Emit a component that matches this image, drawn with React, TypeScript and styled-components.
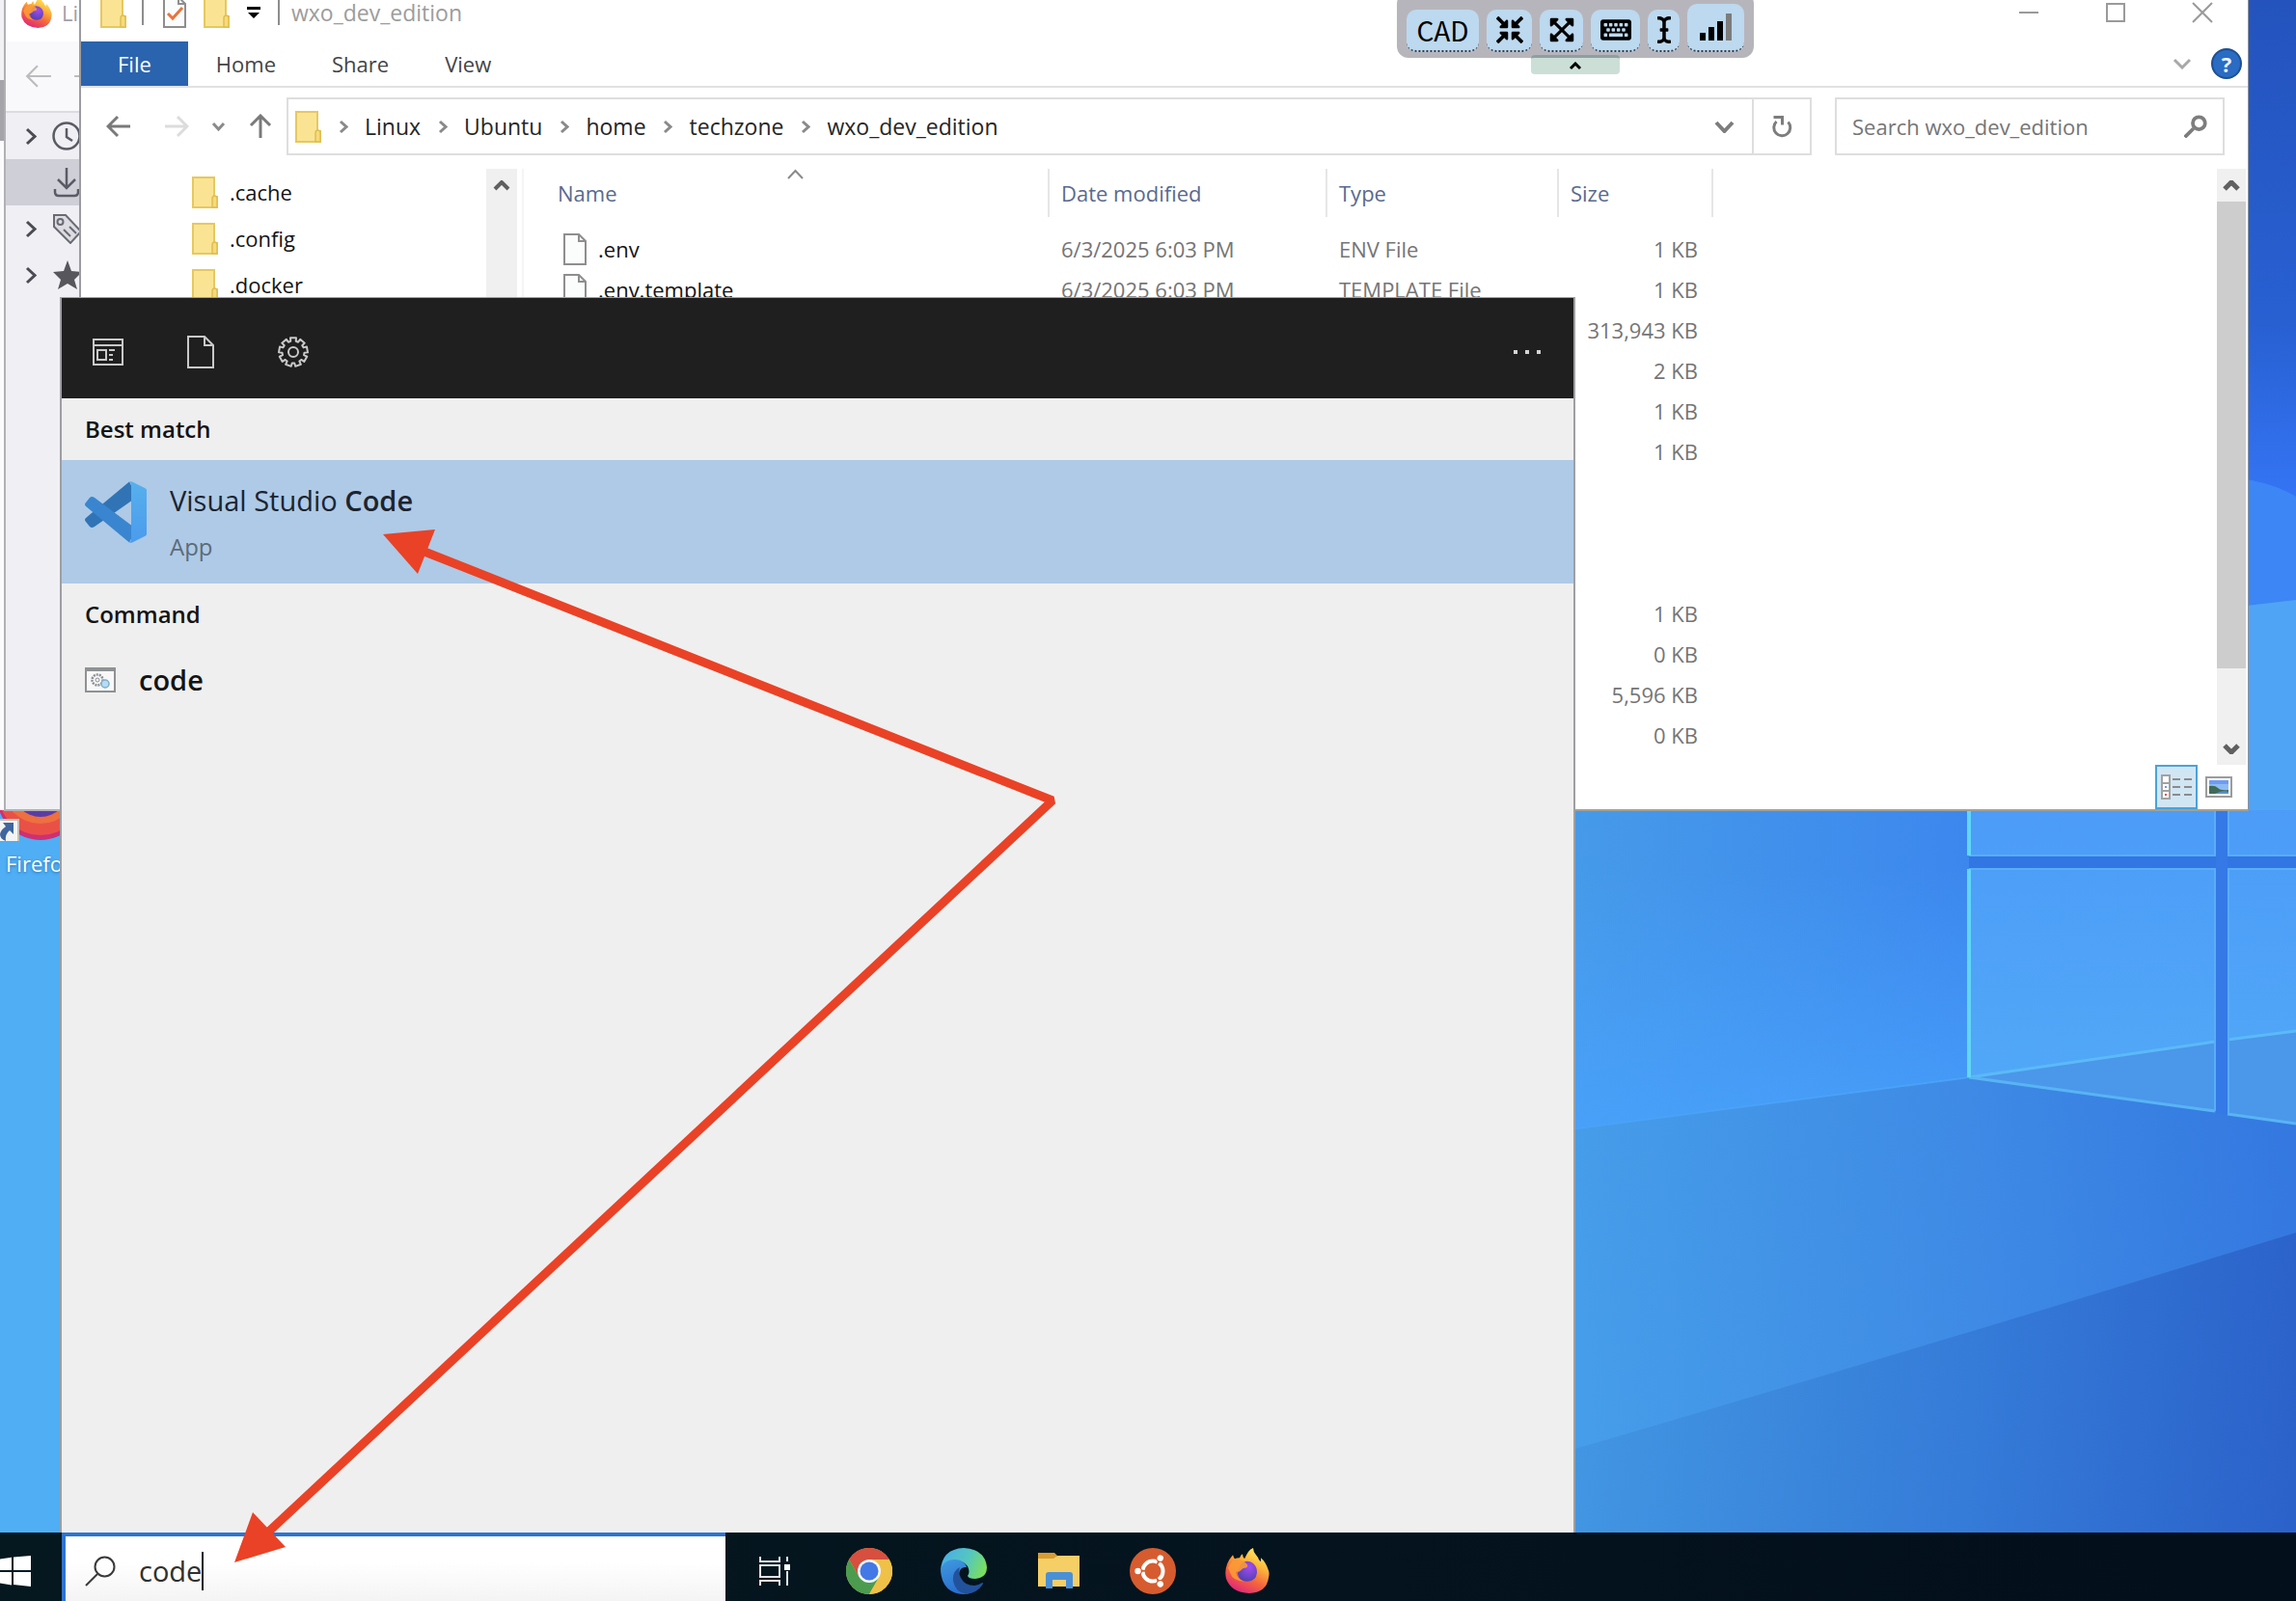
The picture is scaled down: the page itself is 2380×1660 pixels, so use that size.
import React from "react";
import styled, { createGlobalStyle } from "styled-components";
import {
  FaCompressArrowsAlt,
  FaExpandArrowsAlt,
  FaKeyboard,
  FaICursor,
} from "react-icons/fa";

const GlobalStyle = createGlobalStyle`
  *, *::before, *::after { box-sizing: border-box; }
  html, body, #root { height: 100%; margin: 0; }
  body { overflow: hidden; }
  body, button, input, table {
    font-family: "Open Sans", "Noto Sans", sans-serif;
    font-size: 22px;
    line-height: 30px;
  }
  button { border: 0; padding: 0; margin: 0; background: none; color: inherit; }
  input { border: 0; padding: 0; margin: 0; background: none; outline: none; }
  svg { display: block; flex: none; }
`;

/* ---------- desktop ---------- */

const Screen = styled.div`
  position: relative;
  display: flex;
  flex-direction: column;
  height: 100vh;
  overflow: hidden;
  background: #4faef4;
`;

const Workspace = styled.main`
  position: relative;
  flex: 1;
  min-height: 0;
  overflow: hidden;
`;

const WallpaperArt = styled.svg`
  position: absolute;
  inset: 0;
  width: 100%;
  height: 100%;
`;

const DesktopShortcut = styled.button`
  position: absolute;
  left: 0;
  top: 780px;
  width: 90px;
  display: flex;
  flex-direction: column;
  align-items: flex-start;
  gap: 8px;
  color: #fff;
  text-align: left;
`;

const ShortcutLabel = styled.span`
  padding-left: 6px;
  font-size: 22px;
  text-shadow: 0 1px 3px rgba(0, 50, 110, 0.5);
`;

/* ---------- windows at the back ---------- */

const BackWindow = styled.div`
  position: absolute;
  left: 0;
  top: 0;
  width: 40px;
  height: 840px;
  background: #fbfbfd;
`;

const BackBlock = styled.div<{ $h: number; $c: string }>`
  height: ${(p) => p.$h}px;
  background: ${(p) => p.$c};
`;

const DownloadsWindow = styled.section`
  position: absolute;
  left: 4px;
  top: -19px;
  width: 400px;
  height: 860px;
  display: flex;
  flex-direction: column;
  border: 2px solid #b1b1b5;
  background: #f0f0f4;
`;

const DownloadsTitle = styled.header`
  display: flex;
  align-items: center;
  gap: 10px;
  height: 60px;
  padding-left: 16px;
  background: #fff;
  color: #a0a0a8;
`;

const DownloadsNav = styled.div`
  display: flex;
  align-items: center;
  gap: 22px;
  height: 74px;
  padding-left: 20px;
  background: #f9f9fb;
  border-bottom: 2px solid #dcdce0;
`;

const DownloadsList = styled.div`
  display: flex;
  flex-direction: column;
`;

const DownloadsItem = styled.button<{ $active?: boolean }>`
  display: flex;
  align-items: center;
  gap: 16px;
  height: 48px;
  padding-left: 20px;
  background: ${(p) => (p.$active ? "#cfcfd8" : "transparent")};
`;

const ChevronSlot = styled.span`
  display: flex;
  width: 12px;
`;

/* ---------- file explorer ---------- */

const ExplorerWindow = styled.section`
  position: absolute;
  left: 82px;
  right: 49px;
  top: -19px;
  height: 860px;
  display: flex;
  flex-direction: column;
  border: 1px solid #8c9299;
  border-left: 2px solid #9c9ca0;
  border-bottom: 2px solid #a2a196;
  background: #fff;
  overflow: hidden;
`;

const TitleBar = styled.header`
  display: flex;
  align-items: center;
  height: 61px;
  padding: 0 36px 0 20px;
`;

const TitleTools = styled.div`
  display: flex;
  align-items: center;
  gap: 16px;
`;

const QuickGroup = styled.div`
  display: flex;
  align-items: center;
  gap: 18px;
  padding-left: 20px;
`;

const TitleSeparator = styled.span`
  width: 2px;
  height: 26px;
  background: #8d8d8d;
`;

const TitleText = styled.h1`
  margin: 0 0 0 12px;
  font-size: 23px;
  font-weight: 400;
  line-height: 30px;
  color: #9c9c9c;
`;

const WindowButtons = styled.div`
  display: flex;
  gap: 68px;
  margin-left: auto;
`;

const RibbonTabs = styled.nav`
  display: flex;
  align-items: stretch;
  height: 48px;
  padding-right: 6px;
  border-bottom: 2px solid #e1e1e1;
`;

const RibbonTab = styled.button<{ $primary?: boolean }>`
  padding: 0 ${(p) => (p.$primary ? 38 : 29)}px;
  color: ${(p) => (p.$primary ? "#fff" : "#444")};
  background: ${(p) => (p.$primary ? "#2a64ae" : "transparent")};
`;

const RibbonEnd = styled.div`
  display: flex;
  align-items: center;
  gap: 20px;
  margin-left: auto;
`;

const HelpButton = styled.button`
  width: 32px;
  height: 32px;
  border: 2px solid #1d4f91;
  border-radius: 50%;
  background: #2a6bc4;
  color: #e8f2ff;
  font-weight: 700;
  line-height: 26px;
`;

const NavRow = styled.div`
  display: flex;
  align-items: center;
  gap: 24px;
  padding: 10px 24px 14px 26px;
`;

const NavButtons = styled.div`
  display: flex;
  align-items: center;
  gap: 23px;
  margin-right: -10px;
`;

const HistoryButtons = styled.div`
  display: flex;
  gap: 34px;
`;

const AddressBar = styled.div`
  flex: 1;
  display: flex;
  align-items: stretch;
  height: 60px;
  border: 2px solid #dedede;
`;

const Crumbs = styled.div`
  flex: 1;
  display: flex;
  align-items: center;
  gap: 18px;
  padding: 0 18px 0 7px;
`;

const CrumbMark = styled.span`
  display: flex;
  justify-content: center;
  width: 9px;
`;

const Crumb = styled.button`
  font-size: 23px;
  color: #262626;
`;

const CrumbToggle = styled.button`
  margin-left: auto;
`;

const RefreshButton = styled.button`
  display: flex;
  align-items: center;
  justify-content: center;
  width: 60px;
  border-left: 2px solid #dedede;
`;

const SearchBox = styled.label`
  display: flex;
  align-items: center;
  width: 404px;
  height: 60px;
  padding: 0 16px;
  border: 2px solid #dedede;

  input {
    flex: 1;
    min-width: 0;
    font-size: 22px;
  }
  input::placeholder { color: #757575; opacity: 1; }
`;

const ExplorerBody = styled.div`
  flex: 1;
  min-height: 0;
  display: flex;
  padding-right: 2px;
`;

const Tree = styled.div`
  display: flex;
  justify-content: space-between;
  width: 459px;
  padding-right: 5px;
  border-right: 2px solid #f5f5f5;
`;

const TreeItems = styled.ul`
  margin: 0;
  padding: 0 0 0 115px;
  list-style: none;
`;

const TreeItem = styled.li`
  display: flex;
  align-items: center;
  gap: 12px;
  height: 48px;
  color: #141414;
`;

const FilePane = styled.div`
  flex: 1;
  min-width: 0;
  overflow: hidden;
`;

const FileTable = styled.table`
  width: 100%;
  table-layout: fixed;
  border-collapse: separate;
  border-spacing: 0;

  tbody::before {
    content: "";
    display: block;
    height: 12px;
  }
`;

const HeadCell = styled.th<{ $w?: number; $pad?: number }>`
  position: relative;
  width: ${(p) => (p.$w ? p.$w + "px" : "auto")};
  height: 50px;
  padding: 0 0 0 ${(p) => p.$pad ?? 12}px;
  text-align: left;
  font-weight: 400;
  color: #596a90;
  border-right: ${(p) => (p.$w ? "2px solid #e6e6e6" : "0")};
`;

const SortMark = styled.span`
  position: absolute;
  top: 0;
  left: 50%;
`;

const Cell = styled.td<{ $end?: boolean }>`
  height: 42px;
  padding: 0 ${(p) => (p.$end ? 16 : 0)}px 0 12px;
  text-align: ${(p) => (p.$end ? "right" : "left")};
  white-space: nowrap;
  color: #757575;
`;

const NameCell = styled(Cell)`
  padding-left: 41px;
  color: #141414;
`;

const FileLabel = styled.span`
  display: flex;
  align-items: center;
  gap: 12px;
`;

const ScrollTrack = styled.div<{ $w: number }>`
  display: flex;
  flex-direction: column;
  width: ${(p) => p.$w}px;
  background: #f0f0f0;
`;

const ScrollButton = styled.button<{ $last?: boolean }>`
  display: flex;
  align-items: center;
  justify-content: center;
  height: 34px;
  flex: none;
  margin-top: ${(p) => (p.$last ? "auto" : 0)};
`;

const ScrollThumb = styled.div`
  height: 484px;
  background: #cdcdcd;
`;

const StatusBar = styled.footer`
  display: flex;
  align-items: stretch;
  justify-content: flex-end;
  height: 46px;
  padding-right: 8px;
`;

const ViewButton = styled.button<{ $on?: boolean }>`
  display: flex;
  align-items: center;
  justify-content: center;
  width: 44px;
  border: 2px solid ${(p) => (p.$on ? "#4ba3d9" : "transparent")};
  background: ${(p) => (p.$on ? "#d1e6f3" : "transparent")};
`;

/* ---------- remote console toolbar ---------- */

const RemoteDock = styled.div`
  position: absolute;
  left: 1448px;
  top: -8px;
  display: flex;
  flex-direction: column;
  align-items: center;
`;

const RemoteBar = styled.div`
  display: flex;
  align-items: flex-end;
  gap: 8px;
  height: 68px;
  padding: 0 10px 6px;
  border-radius: 12px;
  background: #b7b5bc;
`;

const RemoteButton = styled.button<{ $w: number; $tall?: boolean }>`
  display: flex;
  align-items: center;
  justify-content: center;
  width: ${(p) => p.$w}px;
  height: ${(p) => (p.$tall ? 50 : 44)}px;
  border-bottom: 2px dotted #2f3d4a;
  border-radius: 10px;
  background: #bcd9ef;
  color: #000;
  font-family: "Noto Sans CJK SC", "Open Sans", sans-serif;
  font-size: 28px;
`;

const RemoteCollapse = styled.button`
  display: flex;
  align-items: center;
  justify-content: center;
  width: 92px;
  height: 20px;
  margin-top: -3px;
  border-top: 3px solid #8f9fa1;
  border-radius: 4px;
  background: #ccdfd7;
`;

/* ---------- start search panel ---------- */

const SearchPanel = styled.section`
  position: absolute;
  left: 62px;
  top: 308px;
  bottom: 0;
  width: 66%;
  display: flex;
  flex-direction: column;
  border: 2px solid #9e9fa2;
  border-top-width: 1px;
  border-bottom: 0;
  background: #efefef;
  color: #141414;
`;

const PanelHeader = styled.header`
  display: flex;
  align-items: center;
  gap: 66px;
  height: 104px;
  padding: 8px 32px 0;
  background: #1f1f1f;
`;

const MoreButton = styled.button`
  margin-left: auto;
`;

const GroupTitle = styled.h2`
  display: flex;
  align-items: center;
  height: 64px;
  margin: 0;
  padding-left: 24px;
  font-size: 24px;
  font-weight: 600;
  line-height: 32px;
`;

const BestMatch = styled.button`
  display: flex;
  align-items: flex-start;
  gap: 24px;
  height: 128px;
  padding: 22px 24px 0;
  background: #aecae6;
  color: #1b2430;
  text-align: left;
`;

const BestText = styled.span`
  display: flex;
  flex-direction: column;
  gap: 12px;
`;

const AppName = styled.span`
  font-size: 29px;
  line-height: 40px;
  strong { font-weight: 600; }
`;

const AppKind = styled.span`
  font-size: 24px;
  line-height: 32px;
  color: #5c6b7b;
`;

const CommandRow = styled.button`
  display: flex;
  align-items: center;
  gap: 24px;
  height: 72px;
  padding-left: 24px;
  font-size: 29px;
  font-weight: 600;
  line-height: 40px;
`;

/* ---------- taskbar ---------- */

const Taskbar = styled.footer`
  display: flex;
  height: 71px;
  background: linear-gradient(90deg, #06181f, #04131e 60%, #030f1b);
`;

const StartButton = styled.button`
  display: flex;
  align-items: center;
  width: 64px;
  padding-top: 8px;
`;

const TaskSearch = styled.label`
  display: flex;
  align-items: center;
  width: 688px;
  padding: 4px 0 0 20px;
  border-top: 4px solid #2f74d0;
  border-left: 4px solid #2f74d0;
  background: linear-gradient(#fff 40%, #f4f4f4);

  input {
    field-sizing: content;
    margin-left: 24px;
    font-size: 29px;
    line-height: 40px;
    color: #303030;
  }
`;

const Caret = styled.span`
  width: 2px;
  height: 40px;
  background: #1a1a1a;
`;

const TaskIcons = styled.div`
  display: flex;
  align-items: stretch;
  padding: 8px 0 0 2px;
`;

const TaskButton = styled.button`
  display: flex;
  align-items: center;
  justify-content: center;
  width: 98px;
`;

const Annotation = styled.svg`
  position: absolute;
  left: 0;
  top: 0;
  pointer-events: none;
`;

/* ---------- drawings ---------- */

type Dir = "up" | "down" | "left" | "right";

function Chevron({ dir, w, color, sw = 2 }: { dir: Dir; w: number; color: string; sw?: number }) {
  const flat = dir === "up" || dir === "down";
  const h = Math.round(w / 2);
  const W = (flat ? w : h) + 4;
  const H = (flat ? h : w) + 4;
  const pts = {
    up: [[2, H - 2], [W / 2, 2], [W - 2, H - 2]],
    down: [[2, 2], [W / 2, H - 2], [W - 2, 2]],
    right: [[2, 2], [W - 2, H / 2], [2, H - 2]],
    left: [[W - 2, 2], [2, H / 2], [W - 2, H - 2]],
  }[dir];
  return (
    <svg width={W} height={H} aria-hidden="true">
      <polyline points={pts.map((p) => p.join(",")).join(" ")} fill="none" stroke={color} strokeWidth={sw} />
    </svg>
  );
}

function Arrow({ dir, color, size = 26, sw = 3 }: { dir: Dir; color: string; size?: number; sw?: number }) {
  const turn = { left: 0, up: 90, right: 180, down: 270 }[dir];
  return (
    <svg width={size} height={size} viewBox="0 0 26 26" aria-hidden="true">
      <g transform={`rotate(${turn} 13 13)`} fill="none" stroke={color} strokeWidth={sw}>
        <path d="M2 13H25M12 3L2 13l10 10" />
      </g>
    </svg>
  );
}

function FolderIcon() {
  return (
    <svg width="27" height="33" viewBox="0 0 27 33" aria-hidden="true">
      <path d="M1 1h22v20h3v11H1z" fill="#fae494" stroke="#e6c860" strokeWidth="2" />
      <path d="M21 32V23q0-3 2.500-3t2.500 3v9z" fill="#f6da7c" stroke="#e0be50" strokeWidth="1.500" />
    </svg>
  );
}

function PageIcon({ checked }: { checked?: boolean }) {
  return (
    <svg width="24" height="33" viewBox="0 0 24 33" aria-hidden="true">
      <path d="M1 1h15l7 7v24H1z" fill="#fbfcfc" stroke="#8e8e8e" strokeWidth="2" />
      <path d="M16 1v7h7" fill="none" stroke="#8e8e8e" strokeWidth="2" />
      {checked && <path d="M5 18l5 5 10-11" fill="none" stroke="#e8743b" strokeWidth="3" />}
    </svg>
  );
}

function FirefoxIcon({ w = 46, h = 46, id }: { w?: number; h?: number; id: string }) {
  return (
    <svg width={w} height={h} viewBox="0 0 46 46" preserveAspectRatio="none" aria-hidden="true">
      <defs>
        <linearGradient id={`${id}a`} x1="0.800" y1="0" x2="0.300" y2="1">
          <stop offset="0" stopColor="#fff36a" />
          <stop offset="0.350" stopColor="#fbb43c" />
          <stop offset="0.650" stopColor="#f4663c" />
          <stop offset="1" stopColor="#e0247c" />
        </linearGradient>
        <radialGradient id={`${id}b`} cx="0.600" cy="0.300" r="0.700">
          <stop offset="0" stopColor="#a34bf0" />
          <stop offset="1" stopColor="#5342b4" />
        </radialGradient>
      </defs>
      <path
        d="M8 7q1 3 2 4 2-1 5-1 1-3 3-4 0 3 2 5 2-4 4-7 2-3 5-4 0 4 3 7 2 2 3 5l2 2 0-4q5 4 8 13 1 3 0 7-2 15-20 16Q6 45 1 31-2 18 8 7z"
        fill={`url(#${id}a)`}
      />
      <path d="M16 17q4-5 10-3 7 3 7 11-1 9-10 9-9 0-10-8 0-4 3-9z" fill={`url(#${id}b)`} />
      <path d="M3 20q4-9 12-8 5 1 8 5 1 2-1 3-4 0-6 3-2 2-5 1 1 8 9 10-12 0-15-9z" fill="#fb9a36" opacity="0.900" />
    </svg>
  );
}

function ClockIcon() {
  return (
    <svg width="30" height="30" viewBox="0 0 30 30" fill="none" stroke="#5b5b66" strokeWidth="2.500" aria-hidden="true">
      <circle cx="15" cy="15" r="13.500" />
      <path d="M15 7v9l6 4" />
    </svg>
  );
}

function DownloadIcon() {
  return (
    <svg width="30" height="32" viewBox="0 0 30 32" fill="none" stroke="#5b5b66" strokeWidth="2.500" aria-hidden="true">
      <path d="M15 1v21M6 13l9 9 9-9M3 23v3q0 4 4 4h16q4 0 4-4v-3" />
    </svg>
  );
}

function TagIcon() {
  return (
    <svg width="32" height="32" viewBox="0 0 32 32" fill="none" stroke="#6a6a74" strokeWidth="2" aria-hidden="true">
      <path d="M2 2h12l16 17-11 12L2 14z" fill="#dcdce2" />
      <circle cx="8.500" cy="9" r="3" />
      <path d="M12 17l7 7M18 14l7 7" />
    </svg>
  );
}

function StarIcon() {
  return (
    <svg width="32" height="32" viewBox="0 0 32 32" fill="#56565c" aria-hidden="true">
      <path d="M16 1l4 11 11 1-8 8 3 10-10-6-10 6 3-10-8-8 11-1z" />
    </svg>
  );
}

function Magnifier({ size, color, sw }: { size: number; color: string; sw: number }) {
  return (
    <svg width={size} height={size} viewBox="0 0 32 32" fill="none" stroke={color} strokeWidth={sw} aria-hidden="true">
      <circle cx="20.500" cy="11.500" r={11 - sw / 2} />
      <path d="M13 19L1 31" />
    </svg>
  );
}

function RefreshIcon() {
  return (
    <svg width="22" height="24" viewBox="0 0 22 24" fill="none" stroke="#7d7d7d" strokeWidth="3" aria-hidden="true">
      <path d="M17.500 7.500a8.500 8.500 0 1 1-12 -0.500" />
      <path d="M2.500 2.500h9v8" />
    </svg>
  );
}

function GearIcon() {
  const teeth = 9;
  const pts: string[] = [];
  for (let i = 0; i < teeth; i++) {
    const base = (i * 2 * Math.PI) / teeth - Math.PI / 2;
    const seq: [number, number][] = [
      [-0.24, 11.5],
      [-0.2, 15],
      [0.2, 15],
      [0.24, 11.5],
    ];
    seq.forEach(([a, r]) => {
      pts.push(`${(16 + r * Math.cos(base + a)).toFixed(2)},${(16 + r * Math.sin(base + a)).toFixed(2)}`);
    });
  }
  return (
    <svg width="32" height="32" viewBox="0 0 32 32" fill="none" stroke="#c9c9c9" strokeWidth="2" strokeLinejoin="round" aria-hidden="true">
      <polygon points={pts.join(" ")} />
      <circle cx="16" cy="16" r="5" />
    </svg>
  );
}

function AppsIcon() {
  return (
    <svg width="32" height="28" viewBox="0 0 32 28" fill="none" stroke="#c9c9c9" strokeWidth="2" aria-hidden="true">
      <path d="M1 1h30v26H1zM1 7h30M5 12h9v10H5zM17 12h6M17 17h4M17 22h4" />
    </svg>
  );
}

function BlankPageIcon() {
  return (
    <svg width="28" height="34" viewBox="0 0 28 34" fill="none" stroke="#c9c9c9" strokeWidth="2" aria-hidden="true">
      <path d="M1 1h17l9 9v23H1zM18 1v9h9" />
    </svg>
  );
}

function DotsIcon() {
  return (
    <svg width="30" height="4" viewBox="0 0 30 4" fill="#d4d4d4" aria-hidden="true">
      <path d="M0 0h4v4H0zM12 0h4v4h-4zM24 0h4v4h-4z" />
    </svg>
  );
}

function CodeLogo() {
  return (
    <svg width="64" height="64" viewBox="0 0 64 64" aria-hidden="true">
      <defs>
        <linearGradient id="vsRight" x1="0" y1="0" x2="0" y2="1">
          <stop offset="0" stopColor="#56b0ec" />
          <stop offset="1" stopColor="#4b9bed" />
        </linearGradient>
      </defs>
      <path d="M46 0.500L1 38q-2 2 0 4l4 5q2 2 5 0L48 20.500 50 8z" fill="#3074b6" />
      <path d="M46 63.500L1 26q-2-2 0-4l4-5q2-2 5 0l38 28.500L50 56z" fill="#3a85cf" />
      <path d="M46 0.500q1.500-0.500 3 0L63 7.500q1 0.500 1 2v45q0 1.500-1 2l-14 7q-1.500 0.500-3 0 2-1 2-4V4.500q0-3-2-4z" fill="url(#vsRight)" />
    </svg>
  );
}

function CommandIcon() {
  return (
    <svg width="32" height="26" viewBox="0 0 32 26" aria-hidden="true">
      <path d="M1 1h30v24H1z" fill="#f8f8f8" stroke="#8f9194" strokeWidth="2" />
      <path d="M1 0h30v4H1z" fill="#8f9194" />
      <circle cx="13" cy="13" r="5.500" fill="none" stroke="#8a8f94" strokeWidth="2.500" strokeDasharray="2 1" />
      <circle cx="13" cy="13" r="2" fill="none" stroke="#8a8f94" />
      <circle cx="21" cy="17" r="4" fill="#b5dcf2" stroke="#7eaccb" strokeWidth="1.500" />
    </svg>
  );
}

function SignalIcon() {
  return (
    <svg width="34" height="28" viewBox="0 0 34 28" aria-hidden="true">
      <path d="M0 20h6v8H0zM9 14h6v14H9zM18 8h6v20h-6z" />
      <path d="M27 0h6v28h-6z" fill="#7c7c7c" />
    </svg>
  );
}

function DetailsIcon() {
  return (
    <svg width="32" height="26" viewBox="0 0 32 26" fill="none" stroke="#8b8b8b" strokeWidth="2" aria-hidden="true">
      <path d="M1 1h8v24H1zM1 9h8M1 17h8" fill="#fff" stroke="#a2a2a2" />
      <path d="M12 5h8M24 5h8M12 13h8M24 13h8M12 21h8M24 21h8" />
      <path d="M4 13h2" stroke="#6a9be8" />
      <path d="M4 21h2" stroke="#d9584c" />
    </svg>
  );
}

function ThumbsIcon() {
  return (
    <svg width="28" height="22" viewBox="0 0 28 22" aria-hidden="true">
      <path d="M1 1h26v20H1z" fill="#fff" stroke="#9c9c9c" strokeWidth="2" />
      <path d="M4 4h20v14H4z" fill="#8ebcf2" />
      <path d="M4 4h20v4H4z" fill="#6f9df3" />
      <path d="M4 10q6-1 9 2t11 2v4H4z" fill="#3f6b58" />
      <path d="M10 18q7-4 14-2v2z" fill="#5c8fca" />
    </svg>
  );
}

function WindowsIcon() {
  return (
    <svg width="32" height="32" viewBox="0 0 32 32" fill="#fff" aria-hidden="true">
      <path d="M0 3.500l12-1.700V15H0zM14 1.500L32 0v15H14zM0 17h12v13.500L0 28.500zM14 17h18v15l-18-2z" />
    </svg>
  );
}

function TaskViewIcon() {
  return (
    <svg width="32" height="30" viewBox="0 0 32 30" fill="none" stroke="#dfe4e6" strokeWidth="2" aria-hidden="true">
      <path d="M1 0v5h20V0M1 30v-5h20v5M1 9h20v12H1zM29 0v5M29 15v15" />
      <path d="M26 8h6v6h-6z" fill="#fff" stroke="none" />
    </svg>
  );
}

function ChromeIcon() {
  return (
    <svg width="48" height="48" viewBox="0 0 48 48" aria-hidden="true">
      <circle cx="24" cy="24" r="24" fill="#f0c148" />
      <path d="M3.200 12A24 24 0 0 1 44.800 12L24 13 13.600 30z" fill="#d64f3f" />
      <path d="M3.200 12A24 24 0 0 0 24 48L34.400 30 24 35 13.600 30z" fill="#4b9c4f" />
      <path d="M44.800 12A24 24 0 0 1 24 48L34.400 30 34 18 24 12z" fill="#f0c148" />
      <circle cx="24" cy="24" r="12" fill="#f5f7fb" />
      <circle cx="24" cy="24" r="9.500" fill="#4379e6" />
    </svg>
  );
}

function EdgeIcon() {
  return (
    <svg width="48" height="48" viewBox="0 0 48 48" aria-hidden="true">
      <defs>
        <linearGradient id="edgeTop" x1="0" y1="0.300" x2="1" y2="0.600">
          <stop offset="0" stopColor="#4aaee8" />
          <stop offset="0.550" stopColor="#55c6c0" />
          <stop offset="1" stopColor="#7be05a" />
        </linearGradient>
        <linearGradient id="edgeBody" x1="0" y1="0" x2="0.300" y2="1">
          <stop offset="0" stopColor="#3f9ade" />
          <stop offset="1" stopColor="#2a6fd0" />
        </linearGradient>
      </defs>
      <path d="M0 24Q1 1 24 0q22 1 24 20 0 11-12 12-7 0-8-3 3-4 0-10-5-7-14-6Q4 14 0 24z" fill="url(#edgeTop)" />
      <path d="M0 24Q2 12 15 12q9 0 12 8-7-1-8 7 0 14 13 19-4 2-8 2Q2 47 0 24z" fill="url(#edgeBody)" />
      <path d="M13 34Q12 24 20 20q-2 5 1 11 4 8 14 8 4 0 8-3 2 0 1 1-5 9-17 11-12-2-14-14z" fill="#23529c" />
    </svg>
  );
}

function ExplorerIcon() {
  return (
    <svg width="43" height="37" viewBox="0 0 43 37" aria-hidden="true">
      <path d="M0 0h17l3 3-3 5H0z" fill="#d99c33" />
      <path d="M0 6h16l4-3h23v32H0z" fill="#f5cf66" />
      <path d="M8 37V23q0-3 3-3h22q3 0 3 3v14h-7v-9H15v9z" fill="#4a90d6" />
    </svg>
  );
}

function UbuntuIcon() {
  return (
    <svg width="48" height="48" viewBox="0 0 48 48" aria-hidden="true">
      <circle cx="24" cy="24" r="24" fill="#d65c2f" />
      <circle cx="24" cy="24" r="10.500" fill="none" stroke="#fff" strokeWidth="4" strokeDasharray="20 2" strokeDashoffset="10" />
      {[180, 300, 60].map((a) => (
        <g key={a} transform={`rotate(${a} 24 24)`}>
          <circle cx="39.500" cy="24" r="4.500" fill="#d65c2f" />
          <circle cx="39.500" cy="24" r="3.200" fill="#fff" />
        </g>
      ))}
    </svg>
  );
}

function Wallpaper() {
  return (
    <WallpaperArt viewBox="0 0 2380 1589" preserveAspectRatio="xMaxYMin slice" aria-hidden="true">
      <defs>
        <linearGradient id="wpBase" gradientUnits="userSpaceOnUse" x1="1633" y1="0" x2="2041" y2="0">
          <stop offset="0" stopColor="#469ae9" />
          <stop offset="1" stopColor="#3c87ee" />
        </linearGradient>
        <linearGradient id="wpGlow" x1="0" y1="0" x2="0" y2="1">
          <stop offset="0" stopColor="#49a2fc" stopOpacity="0" />
          <stop offset="1" stopColor="#49a2fc" stopOpacity="0.800" />
        </linearGradient>
        <linearGradient id="wpMid" gradientUnits="userSpaceOnUse" x1="1633" y1="1250" x2="2380" y2="1200">
          <stop offset="0" stopColor="#469de9" />
          <stop offset="0.550" stopColor="#3e8ae5" />
          <stop offset="1" stopColor="#3478e0" />
        </linearGradient>
        <linearGradient id="wpLow" gradientUnits="userSpaceOnUse" x1="1633" y1="1450" x2="2380" y2="1500">
          <stop offset="0" stopColor="#4296e2" />
          <stop offset="0.550" stopColor="#357bd8" />
          <stop offset="1" stopColor="#2b62ca" />
        </linearGradient>
        <linearGradient id="wpSky" x1="0" y1="0" x2="0" y2="1">
          <stop offset="0" stopColor="#2453bd" />
          <stop offset="0.650" stopColor="#2860d2" />
          <stop offset="1" stopColor="#3474f4" />
        </linearGradient>
        <linearGradient id="wpPane" x1="0" y1="0" x2="0" y2="1">
          <stop offset="0" stopColor="#4b9af8" />
          <stop offset="1" stopColor="#52a9f7" />
        </linearGradient>
      </defs>
      <rect width="1633" height="1589" fill="#4faef4" />
      <rect x="1620" y="0" width="760" height="1200" fill="url(#wpBase)" />
      <path d="M1620 900H2041V1117L1620 1172z" fill="url(#wpGlow)" />
      <path d="M1620 1172L2041 1117L2380 1165V1589H1620z" fill="url(#wpMid)" />
      <path d="M1620 1172L2041 1117" stroke="#4aa2f8" strokeWidth="2" />
      <path d="M1620 1506Q2000 1395 2380 1278V1589H1620z" fill="url(#wpLow)" />
      <path d="M2041 800H2296V1152L2041 1117z" fill="url(#wpPane)" />
      <path d="M2309 800H2380V1165L2309 1155z" fill="url(#wpPane)" />
      <path d="M2041 1117L2296 1080V1152zM2309 1078L2380 1069V1165L2309 1155z" fill="#4b97ea" />
      <path d="M2041 1117L2296 1080M2309 1078L2380 1069" stroke="#5bbaf8" strokeWidth="3" />
      <path d="M2041 1117L2296 1152M2309 1155L2380 1165" stroke="#58b4f4" strokeWidth="3" />
      <path d="M2296 800V1152M2310 840V1155M2041 887H2380M2041 901H2380" stroke="#58adf8" strokeWidth="2" />
      <path d="M2041 888H2380V900H2041z" fill="#3176e2" />
      <path d="M2297 800H2309V1156L2297 1154z" fill="#3479e6" />
      <path d="M2041 800V887M2041 901V1117" stroke="#62d6f6" strokeWidth="4" />
      <path d="M2320 0H2380V515Q2355 500 2320 496z" fill="url(#wpSky)" />
      <path d="M2320 496Q2355 500 2380 515V622L2320 629z" fill="#3c86f5" />
      <path d="M2320 629L2380 622V840H2320z" fill="#50a4f6" />
    </WallpaperArt>
  );
}

/* ---------- data ---------- */

type Row = { name?: string; date?: string; type?: string; size?: string };

const rows: Row[] = [
  { name: ".env", date: "6/3/2025 6:03 PM", type: "ENV File", size: "1 KB" },
  { name: ".env.template", date: "6/3/2025 6:03 PM", type: "TEMPLATE File", size: "1 KB" },
  { size: "313,943 KB" },
  { size: "2 KB" },
  { size: "1 KB" },
  { size: "1 KB" },
  {},
  {},
  {},
  { size: "1 KB" },
  { size: "0 KB" },
  { size: "5,596 KB" },
  { size: "0 KB" },
];

const path = ["Linux", "Ubuntu", "home", "techzone", "wxo_dev_edition"];
const folders = [".cache", ".config", ".docker"];

/* ---------- parts ---------- */

function Downloads() {
  return (
    <DownloadsWindow aria-label="Library">
      <DownloadsTitle>
        <FirefoxIcon w={32} h={32} id="ffTitle" />
        <span>Library</span>
      </DownloadsTitle>
      <DownloadsNav>
        <Arrow dir="left" color="#bcbcbf" size={28} sw={2} />
        <Arrow dir="right" color="#bcbcbf" size={28} sw={2} />
      </DownloadsNav>
      <DownloadsList>
        <DownloadsItem aria-label="History">
          <ChevronSlot><Chevron dir="right" w={15} color="#4c4c55" sw={3} /></ChevronSlot>
          <ClockIcon />
        </DownloadsItem>
        <DownloadsItem $active aria-label="Downloads">
          <ChevronSlot />
          <DownloadIcon />
        </DownloadsItem>
        <DownloadsItem aria-label="Tags">
          <ChevronSlot><Chevron dir="right" w={15} color="#4c4c55" sw={3} /></ChevronSlot>
          <TagIcon />
        </DownloadsItem>
        <DownloadsItem aria-label="Bookmarks">
          <ChevronSlot><Chevron dir="right" w={15} color="#4c4c55" sw={3} /></ChevronSlot>
          <StarIcon />
        </DownloadsItem>
      </DownloadsList>
    </DownloadsWindow>
  );
}

function QuickTools() {
  return (
    <QuickGroup>
      <PageIcon checked />
      <FolderIcon />
      <svg width="14" height="12" aria-hidden="true">
        <path d="M0 0h14v3H0zM1 6h12l-6 6z" fill="#000" />
      </svg>
      <TitleSeparator />
    </QuickGroup>
  );
}

function Explorer() {
  return (
    <ExplorerWindow>
      <TitleBar>
        <TitleTools>
          <FolderIcon />
          <TitleSeparator />
        </TitleTools>
        <QuickTools />
        <TitleText>wxo_dev_edition</TitleText>
        <WindowButtons>
          <button aria-label="Minimize">
            <svg width="22" height="22" stroke="#9a9a9a" strokeWidth="2"><path d="M1 11h20" /></svg>
          </button>
          <button aria-label="Maximize">
            <svg width="22" height="22" fill="none" stroke="#9a9a9a" strokeWidth="2"><path d="M2 2h18v18H2z" /></svg>
          </button>
          <button aria-label="Close">
            <svg width="22" height="22" stroke="#9a9a9a" strokeWidth="2"><path d="M1 1l20 20M21 1L1 21" /></svg>
          </button>
        </WindowButtons>
      </TitleBar>
      <RibbonTabs>
        <RibbonTab $primary>File</RibbonTab>
        <RibbonTab>Home</RibbonTab>
        <RibbonTab>Share</RibbonTab>
        <RibbonTab>View</RibbonTab>
        <RibbonEnd>
          <button aria-label="Expand the ribbon"><Chevron dir="down" w={16} color="#a8a8a8" sw={3} /></button>
          <HelpButton aria-label="Help">?</HelpButton>
        </RibbonEnd>
      </RibbonTabs>
      <NavRow>
        <NavButtons>
          <HistoryButtons>
            <button aria-label="Back"><Arrow dir="left" color="#7a7a7a" /></button>
            <button aria-label="Forward"><Arrow dir="right" color="#dcdcdc" /></button>
          </HistoryButtons>
          <button aria-label="Recent locations"><Chevron dir="down" w={11} color="#8a8a8a" sw={3} /></button>
          <button aria-label="Up"><Arrow dir="up" color="#7a7a7a" /></button>
        </NavButtons>
        <AddressBar>
          <Crumbs>
            <FolderIcon />
            {path.map((p) => (
              <React.Fragment key={p}>
                <CrumbMark><Chevron dir="right" w={11} color="#8a8a8a" sw={3} /></CrumbMark>
                <Crumb>{p}</Crumb>
              </React.Fragment>
            ))}
            <CrumbToggle aria-label="Previous locations">
              <Chevron dir="down" w={17} color="#7d7d7d" sw={4} />
            </CrumbToggle>
          </Crumbs>
          <RefreshButton aria-label="Refresh"><RefreshIcon /></RefreshButton>
        </AddressBar>
        <SearchBox>
          <input type="text" placeholder="Search wxo_dev_edition" aria-label="Search wxo_dev_edition" />
          <Magnifier size={24} color="#7d7d7d" sw={5} />
        </SearchBox>
      </NavRow>
      <ExplorerBody>
        <Tree>
          <TreeItems>
            {folders.map((f) => (
              <TreeItem key={f}>
                <FolderIcon />
                {f}
              </TreeItem>
            ))}
          </TreeItems>
          <ScrollTrack $w={32}>
            <ScrollButton aria-label="Scroll tree up"><Chevron dir="up" w={14} color="#606060" sw={4} /></ScrollButton>
          </ScrollTrack>
        </Tree>
        <FilePane>
          <FileTable>
            <thead>
              <tr>
                <HeadCell $w={545} $pad={35}>
                  Name
                  <SortMark><Chevron dir="up" w={15} color="#8a8a8a" /></SortMark>
                </HeadCell>
                <HeadCell $w={288}>Date modified</HeadCell>
                <HeadCell $w={240}>Type</HeadCell>
                <HeadCell $w={160}>Size</HeadCell>
                <HeadCell as="td" />
              </tr>
            </thead>
            <tbody>
              {rows.map((r, i) => (
                <tr key={i}>
                  <NameCell>
                    {r.name && (
                      <FileLabel>
                        <PageIcon />
                        {r.name}
                      </FileLabel>
                    )}
                  </NameCell>
                  <Cell>{r.date}</Cell>
                  <Cell>{r.type}</Cell>
                  <Cell $end>{r.size}</Cell>
                </tr>
              ))}
            </tbody>
          </FileTable>
        </FilePane>
        <ScrollTrack $w={30}>
          <ScrollButton aria-label="Scroll up"><Chevron dir="up" w={14} color="#606060" sw={5} /></ScrollButton>
          <ScrollThumb />
          <ScrollButton $last aria-label="Scroll down"><Chevron dir="down" w={14} color="#606060" sw={5} /></ScrollButton>
        </ScrollTrack>
      </ExplorerBody>
      <StatusBar>
        <ViewButton $on aria-label="Details view"><DetailsIcon /></ViewButton>
        <ViewButton aria-label="Large icons view"><ThumbsIcon /></ViewButton>
      </StatusBar>
    </ExplorerWindow>
  );
}

function RemoteToolbar() {
  return (
    <RemoteDock>
      <RemoteBar>
        <RemoteButton $w={75}>CAD</RemoteButton>
        <RemoteButton $w={47} aria-label="Shrink"><FaCompressArrowsAlt size={28} /></RemoteButton>
        <RemoteButton $w={45} aria-label="Full screen"><FaExpandArrowsAlt size={28} /></RemoteButton>
        <RemoteButton $w={51} aria-label="Keyboard"><FaKeyboard size={32} /></RemoteButton>
        <RemoteButton $w={33} aria-label="Text input"><FaICursor size={28} /></RemoteButton>
        <RemoteButton $w={59} $tall aria-label="Connection"><SignalIcon /></RemoteButton>
      </RemoteBar>
      <RemoteCollapse aria-label="Collapse toolbar"><Chevron dir="up" w={10} color="#000" sw={3} /></RemoteCollapse>
    </RemoteDock>
  );
}

function StartSearch() {
  return (
    <SearchPanel>
      <PanelHeader>
        <button aria-label="Apps"><AppsIcon /></button>
        <button aria-label="Documents"><BlankPageIcon /></button>
        <button aria-label="Settings"><GearIcon /></button>
        <MoreButton aria-label="More"><DotsIcon /></MoreButton>
      </PanelHeader>
      <GroupTitle>Best match</GroupTitle>
      <BestMatch>
        <CodeLogo />
        <BestText>
          <AppName>Visual Studio <strong>Code</strong></AppName>
          <AppKind>App</AppKind>
        </BestText>
      </BestMatch>
      <GroupTitle>Command</GroupTitle>
      <CommandRow>
        <CommandIcon />
        code
      </CommandRow>
    </SearchPanel>
  );
}

export default function App() {
  return (
    <>
      <GlobalStyle />
      <Screen>
        <Workspace>
          <Wallpaper />
          <DesktopShortcut>
            <svg width="90" height="92" viewBox="0 0 90 92" aria-hidden="true">
              <circle cx="42" cy="46" r="45" fill="#cf2f74" />
              <circle cx="42" cy="42" r="44" fill="#ea5146" />
              <circle cx="42" cy="34" r="40" fill="#ee6f3f" />
              <circle cx="42" cy="38" r="29" fill="#5b3ca6" />
              <path d="M-1 70h20v24H-1z" fill="#f4f4f4" stroke="#c9c0b8" strokeWidth="2" />
              <path d="M3 73h11v12l-4-4q-5 4-4 11-6-2-6-7 1-5 6-8z" fill="#3f669f" />
            </svg>
            <ShortcutLabel>Firefox</ShortcutLabel>
          </DesktopShortcut>
          <BackWindow>
            <BackBlock $h={83} $c="#f2f2f5" />
            <BackBlock $h={63} $c="#a5a5a9" />
          </BackWindow>
          <Downloads />
          <Explorer />
          <RemoteToolbar />
          <StartSearch />
        </Workspace>
        <Taskbar>
          <StartButton aria-label="Start"><WindowsIcon /></StartButton>
          <TaskSearch>
            <Magnifier size={32} color="#3a3a3a" sw={2} />
            <input type="text" defaultValue="code" aria-label="Type here to search" />
            <Caret />
          </TaskSearch>
          <TaskIcons>
            <TaskButton aria-label="Task view"><TaskViewIcon /></TaskButton>
            <TaskButton aria-label="Chrome"><ChromeIcon /></TaskButton>
            <TaskButton aria-label="Edge"><EdgeIcon /></TaskButton>
            <TaskButton aria-label="File Explorer"><ExplorerIcon /></TaskButton>
            <TaskButton aria-label="Ubuntu"><UbuntuIcon /></TaskButton>
            <TaskButton aria-label="Firefox"><FirefoxIcon w={46} h={47} id="ffTask" /></TaskButton>
          </TaskIcons>
        </Taskbar>
        <Annotation width="1100" height="1630" viewBox="0 0 1100 1630" aria-hidden="true">
          <path d="M430 568L1091 830L270 1596" fill="none" stroke="#ea4226" strokeWidth="9" strokeLinejoin="bevel" />
          <path d="M397 554L451 549L433 595zM243 1620L262 1568L296 1604z" fill="#ea4226" />
        </Annotation>
      </Screen>
    </>
  );
}
